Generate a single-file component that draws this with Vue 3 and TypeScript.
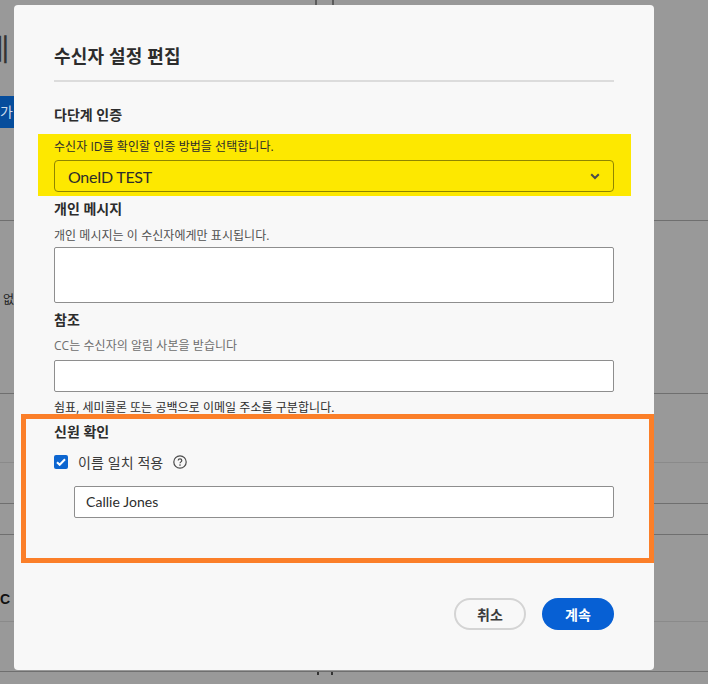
<template>
  <div class="page">
    <div class="backdrop">
      <div class="ticks top"><i></i><i></i></div>
      <div class="bg-row hero">
        <span class="hero-title">세</span>
        <span class="bg-btn">가</span>
      </div>
      <div class="bg-row r2"><span class="cell-text">없</span></div>
      <div class="bg-row r3"></div>
      <div class="bg-row r4"></div>
      <div class="bg-row r5"></div>
      <div class="bg-row r6"><span class="cell-bold">C</span></div>
      <div class="bg-row r7"></div>
      <div class="ticks bottom"><i></i><i></i></div>
    </div>

    <div class="modal">
      <h1 class="title">수신자 설정 편집</h1>

      <h2 class="label first">다단계 인증</h2>
      <div class="marked">
        <p class="help dark">수신자 ID를 확인할 인증 방법을 선택합니다.</p>
        <div class="select">
          <span>OneID TEST</span>
          <svg width="10" height="7" viewBox="0 0 10 7">
            <path d="M1.2 1.2 5 5l3.8-3.8" fill="none" stroke="#4b4b4b" stroke-width="2" />
          </svg>
        </div>
      </div>

      <h2 class="label msg">개인 메시지</h2>
      <p class="help">개인 메시지는 이 수신자에게만 표시됩니다.</p>
      <div class="field area"></div>

      <h2 class="label cc">참조</h2>
      <p class="help light">CC는 수신자의 알림 사본을 받습니다</p>
      <div class="field"></div>
      <p class="help dark below">쉼표, 세미콜론 또는 공백으로 이메일 주소를 구분합니다.</p>

      <h2 class="label identity">신원 확인</h2>
      <div class="check-row">
        <span class="check">
          <svg width="10" height="8" viewBox="0 0 10 8">
            <path d="M1 4.2 3.7 6.8 9 1.2" fill="none" stroke="#fff" stroke-width="2" />
          </svg>
        </span>
        <span class="check-label">이름 일치 적용</span>
        <svg class="help-icon" width="14" height="14" viewBox="0 0 14 14">
          <circle cx="7" cy="7" r="6.2" fill="none" stroke="#4b4b4b" stroke-width="1.2" />
          <path d="M5.2 5.6C5.2 4.5 6 3.9 7 3.9s1.8.6 1.8 1.6c0 1.3-1.8 1.4-1.8 2.8" fill="none" stroke="#4b4b4b" stroke-width="1.2" />
          <circle cx="7" cy="10.1" r=".8" fill="#4b4b4b" />
        </svg>
      </div>
      <div class="field name">Callie Jones</div>

      <div class="actions">
        <button class="btn secondary">취소</button>
        <button class="btn primary">계속</button>
      </div>
    </div>

    <div class="callout"></div>
  </div>
</template>

<script setup lang="ts">
</script>

<style>
html,
body {
  margin: 0;
  background: #999;
}
</style>

<style scoped>
.page {
  position: relative;
  width: 708px;
  height: 684px;
  overflow: hidden;
  background: #999;
  font-family: "Open Sans", "Noto Sans CJK KR", sans-serif;
  color: #2c2c2c;
}

.ticks {
  display: flex;
  padding-left: 315px;
  gap: 15px;
}
.ticks i {
  display: block;
  width: 2px;
  background: #5c5c5c;
}
.ticks.top {
  height: 5px;
}
.ticks.bottom {
  height: 3px;
  padding-left: 317px;
  gap: 12px;
}
.ticks.bottom i {
  background: #333;
}

.bg-row {
  box-sizing: border-box;
  border-bottom: 1px solid #6f6f6f;
  overflow: hidden;
  font-family: "Liberation Sans", "Noto Sans CJK KR", sans-serif;
}

.hero {
  height: 216px;
  padding-top: 91px;
  position: relative;
}
.hero-title {
  position: absolute;
  left: -18px;
  top: 27px;
  font-size: 30px;
  line-height: 36px;
  color: #333;
}
.bg-btn {
  display: block;
  width: 14px;
  height: 32px;
  background: #064d9c;
  color: #cfdcec;
  font-size: 14px;
  line-height: 32px;
}
.r2 {
  height: 173px;
  padding-top: 69px;
}
.cell-text {
  font-size: 12px;
  line-height: 18px;
  color: #222;
  margin-left: 3px;
}
.r3 {
  height: 69px;
  border-bottom-color: #8a8a8a;
}
.r4 {
  height: 41px;
}
.r5 {
  height: 31px;
}
.r6 {
  height: 87px;
  padding-top: 55px;
  border-bottom-color: #8a8a8a;
}
.cell-bold {
  font-size: 14px;
  font-weight: 700;
  line-height: 18px;
  color: #111;
}
.r7 {
  height: 50px;
}

.modal {
  position: absolute;
  left: 14px;
  top: 5px;
  box-sizing: border-box;
  width: 640px;
  height: 665px;
  padding: 38px 40px 0;
  background: #f8f8f8;
  border-radius: 4px;
}

.title {
  margin: 0;
  padding-bottom: 11px;
  border-bottom: 2px solid #dcdcdc;
  font-size: 18px;
  line-height: 26px;
  font-weight: 700;
  letter-spacing: 0.15px;
}

.label {
  margin: 0;
  font-size: 14px;
  line-height: 20px;
  font-weight: 700;
}
.label.first {
  margin-top: 23px;
}
.label.msg {
  margin-top: 3px;
}
.label.cc {
  margin-top: 7px;
}
.label.identity {
  margin-top: 6px;
  position: relative;
  z-index: 1;
}

.help {
  margin: 8px 0 3px;
  font-size: 12px;
  line-height: 17px;
  letter-spacing: 0.05px;
  color: #505050;
}
.help.dark {
  color: #2c2c2c;
}
.help.light {
  margin-top: 7px;
  margin-bottom: 6px;
  color: #6e6e6e;
}
.help.below {
  margin: 7px 0 0;
}

.marked {
  margin: 9px -17px 0 -16px;
  padding: 4px 17px 4px 16px;
  height: 62px;
  box-sizing: border-box;
  background: #fde800;
}
.marked .help {
  margin: 0 0 5px;
}

.select {
  box-sizing: border-box;
  height: 32px;
  display: flex;
  align-items: center;
  justify-content: space-between;
  padding: 0 13px 0 13px;
  border: 1px solid #8f8500;
  border-radius: 4px;
  font-family: Lato, "Noto Sans CJK KR", sans-serif;
  font-size: 16px;
  letter-spacing: -0.3px;
  color: #2c2c2c;
}

.field {
  box-sizing: border-box;
  height: 32px;
  background: #fff;
  border: 1px solid #8e8e8e;
  border-radius: 2px;
}
.field.area {
  height: 56px;
}
.field.name {
  margin-left: 20px;
  padding-left: 11px;
  font-family: Lato, "Noto Sans CJK KR", sans-serif;
  font-size: 14px;
  line-height: 30px;
  letter-spacing: 0.05px;
  color: #2c2c2c;
}

.check-row {
  display: flex;
  align-items: center;
  height: 20px;
  margin-top: 10px;
  margin-bottom: 14px;
}
.check {
  box-sizing: border-box;
  width: 14px;
  height: 14px;
  border-radius: 2px;
  background: #0d66d0;
  display: flex;
  align-items: center;
  justify-content: center;
}
.check-label {
  margin-left: 10px;
  font-size: 14px;
  letter-spacing: 0.1px;
  color: #3a3a3a;
}
.help-icon {
  margin-left: 10px;
}

.actions {
  display: flex;
  justify-content: flex-end;
  gap: 16px;
  margin-top: 80px;
}
.btn {
  box-sizing: border-box;
  width: 72px;
  height: 32px;
  border-radius: 16px;
  font-family: inherit;
  font-size: 14px;
  font-weight: 700;
  padding: 0;
}
.btn.secondary {
  background: transparent;
  border: 2px solid #d4d4d4;
  color: #3a3a3a;
}
.btn.primary {
  background: #0760d4;
  border: 0;
  color: #fff;
}

.callout {
  position: absolute;
  left: 21px;
  top: 414px;
  width: 633px;
  height: 149px;
  box-sizing: border-box;
  border: 5px solid #fb7f29;
  pointer-events: none;
}
</style>
